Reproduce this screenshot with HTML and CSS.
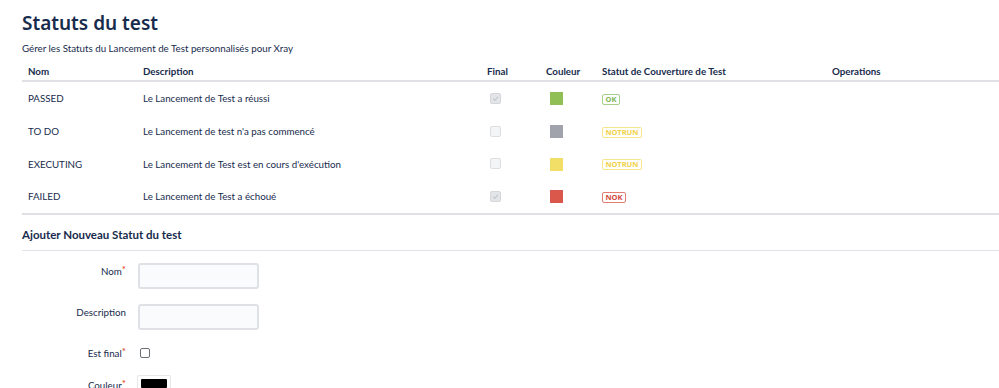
FILE: index.html
```html
<!DOCTYPE html>
<html lang="fr">
<head>
<meta charset="utf-8">
<title>Statuts du test</title>
<link rel="stylesheet" href="styles.css">
</head>
<body>
<div class="page">
  <h1 class="title">Statuts du test</h1>
  <p class="subtitle">Gérer les Statuts du Lancement de Test personnalisés pour Xray</p>
  <table class="statuses">
    <colgroup>
      <col class="c-name"><col class="c-desc"><col class="c-final"><col class="c-color"><col class="c-cov"><col class="c-ops">
    </colgroup>
    <thead>
      <tr><th>Nom</th><th>Description</th><th>Final</th><th>Couleur</th><th>Statut de Couverture de Test</th><th>Operations</th></tr>
    </thead>
    <tbody>
      <tr>
        <td>PASSED</td><td>Le Lancement de Test a réussi</td>
        <td><span class="chk checked"><svg viewBox="0 0 10 10" width="10" height="10"><path d="M2.3 5.2 L4.2 7 L7.8 3" fill="none" stroke="#c4c7cc" stroke-width="1.3"/></svg></span></td>
        <td><span class="swatch green"></span></td>
        <td><span class="badge ok">OK</span></td><td></td>
      </tr>
      <tr>
        <td>TO DO</td><td>Le Lancement de test n'a pas commencé</td>
        <td><span class="chk"></span></td>
        <td><span class="swatch gray"></span></td>
        <td><span class="badge notrun">NOTRUN</span></td><td></td>
      </tr>
      <tr>
        <td>EXECUTING</td><td>Le Lancement de Test est en cours d'exécution</td>
        <td><span class="chk"></span></td>
        <td><span class="swatch yellow"></span></td>
        <td><span class="badge notrun">NOTRUN</span></td><td></td>
      </tr>
      <tr>
        <td>FAILED</td><td>Le Lancement de Test a échoué</td>
        <td><span class="chk checked"><svg viewBox="0 0 10 10" width="10" height="10"><path d="M2.3 5.2 L4.2 7 L7.8 3" fill="none" stroke="#c4c7cc" stroke-width="1.3"/></svg></span></td>
        <td><span class="swatch red"></span></td>
        <td><span class="badge nok">NOK</span></td><td></td>
      </tr>
    </tbody>
  </table>

  <h2 class="section">Ajouter Nouveau Statut du test</h2>
  <form class="form">
    <div class="field">
      <label class="lbl">Nom<span class="req">*</span></label>
      <span class="input"></span>
    </div>
    <div class="field">
      <label class="lbl">Description</label>
      <span class="input"></span>
    </div>
    <div class="field small">
      <label class="lbl">Est final<span class="req">*</span></label>
      <span class="box"></span>
    </div>
    <div class="field small">
      <label class="lbl">Couleur<span class="req">*</span></label>
      <span class="colorpick"><span class="colorfill"></span></span>
    </div>
  </form>
</div>
</body>
</html>
```
FILE: styles.css
```css
html, body {
  margin: 0;
  padding: 0;
  background: #ffffff;
}
body {
  font-family: Lato, "Noto Sans", sans-serif;
  color: #172b4d;
  font-size: 9.75px;
  overflow: hidden;
}
.page {
  padding-left: 22px;
}
.title {
  margin: 0;
  padding-top: 10px;
  font-family: "Noto Sans", "Open Sans", sans-serif;
  font-size: 19px;
  font-weight: 600;
  line-height: 26px;
  color: #172b4d;
}
.subtitle {
  margin: 0;
  padding-top: 4px;
  font-size: 9.75px;
  line-height: 16px;
  color: #172b4d;
}
.statuses {
  width: 977px;
  border-collapse: collapse;
  table-layout: fixed;
  margin-top: 6px;
}
.c-name { width: 115px; }
.c-desc { width: 344px; }
.c-final { width: 59px; }
.c-color { width: 56px; }
.c-cov { width: 230px; }
.c-ops { width: auto; }
.statuses th {
  text-align: left;
  font-weight: 700;
  font-size: 9.75px;
  padding: 0 6px;
  height: 18px;
  border-bottom: 2px solid #dfe1e6;
}
.statuses td {
  padding: 0 6px;
  height: 32.7px;
  font-size: 9.75px;
  vertical-align: middle;
}
.statuses tbody tr:last-child td {
  border-bottom: 2px solid #dfe1e6;
}
.chk {
  display: inline-block;
  width: 9px;
  height: 9px;
  border: 1px solid #dcdee2;
  border-radius: 2px;
  background: #f4f5f7;
  vertical-align: middle;
  position: relative;
  top: -1px;
  margin-left: 3px;
}
.chk.checked {
  background: #e4e5e8;
  border-color: #d4d6da;
}
.chk svg {
  display: block;
  width: 9px;
  height: 9px;
}
.swatch {
  display: inline-block;
  width: 13px;
  height: 13px;
  vertical-align: middle;
  margin-left: 4px;
}
.swatch.green { background: #8fbf55; }
.swatch.gray { background: #a0a3ab; }
.swatch.yellow { background: #f1df67; }
.swatch.red { background: #d9584b; }
.badge {
  display: inline-block;
  font-family: "Noto Sans", sans-serif;
  font-size: 7.5px;
  font-weight: 700;
  line-height: 9px;
  padding: 0 2.5px;
  border: 1px solid;
  border-radius: 2px;
  vertical-align: middle;
}
.badge.ok { color: #82b65a; border-color: #a7d18a; }
.badge.notrun { color: #f0d24a; border-color: #f5e68a; }
.badge.nok { color: #d34b3f; border-color: #e27d73; }

.section {
  margin: 0;
  padding-top: 12px;
  height: 23px;
  font-size: 11.5px;
  font-weight: 700;
  line-height: 16px;
  border-bottom: 1px solid #dfe1e6;
}
.form {
  padding-top: 14px;
}
.field {
  display: flex;
  align-items: flex-start;
  height: 41px;
}
.field.small { height: 32px; }
.lbl {
  width: 104px;
  text-align: right;
  font-size: 9.75px;
  line-height: 14px;
  margin-top: -1px;
  color: #172b4d;
}
.req { color: #de350b; font-size: 10px; line-height: 10px; vertical-align: top; }
.input {
  display: block;
  margin-left: 12px;
  width: 117px;
  height: 22px;
  background: #fafbfc;
  border: 2px solid #dfe1e6;
  border-radius: 3px;
  margin-top: -2px;
}
.box {
  display: block;
  margin-left: 14px;
  margin-top: 1px;
  width: 8px;
  height: 8px;
  border: 1px solid #6b6f76;
  border-radius: 2px;
}
.colorpick {
  display: block;
  margin-left: 11px;
  margin-top: -4px;
  width: 26px;
  height: 12px;
  padding: 3px;
  border: 1px solid #e6e7ea;
  border-radius: 2px;
  background: #fff;
}
.colorfill {
  display: block;
  width: 100%;
  height: 9px;
  background: #000;
  border-radius: 1px;
}
```
